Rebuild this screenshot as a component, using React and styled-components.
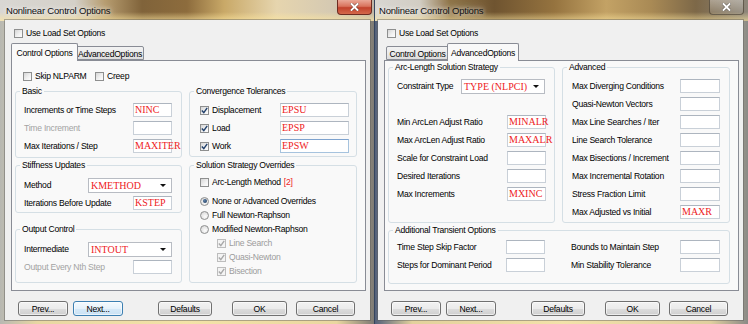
import React from 'react'
import styled, { createGlobalStyle, css } from 'styled-components'

const GlobalStyle = createGlobalStyle`
  html, body { margin: 0; padding: 0; background: #3a3226; }
  body {
    font-family: "Liberation Sans", Arial, sans-serif;
    font-size: 8.6px;
    letter-spacing: -0.25px;
    color: #000;
  }
  * { box-sizing: border-box; }
`

const Screen = styled.div`
  display: flex;
  width: 748px;
  height: 324px;
  overflow: hidden;
`

const activeBg = `
  linear-gradient(180deg, rgba(255,240,190,0) 0px, rgba(255,240,190,0) 12px, rgba(255,232,160,.6) 20px) top / 100% 21px no-repeat,
  linear-gradient(90deg, #d9d7d3 0%, #d4d0c8 20%, #b79d70 28%, #80633a 38%, #8d6c3d 50%, #c9a968 60%, #e6d5ae 74%, #d6cab2 88%, #bdb5a8 100%) top / 100% 21px no-repeat,
  linear-gradient(90deg, #b8b8b2 0%, #e8d7a2 10%, #f4e3a8 50%, #ead7a0 90%, #7d7a74 100%)
`
const inactiveBg = `
  linear-gradient(180deg, rgba(255,240,190,0) 0px, rgba(255,240,190,0) 12px, rgba(255,232,160,.55) 20px) top / 100% 21px no-repeat,
  linear-gradient(90deg, #d8d6d2 0%, #d2cdc3 12%, #8f7448 20%, #6f5430 32%, #95733f 48%, #c3a265 62%, #a98a55 74%, #7d6848 86%, #8e877b 100%) top / 100% 21px no-repeat,
  linear-gradient(90deg, #53607a 0%, #e3d19c 10%, #f3e2aa 50%, #e0cf9f 90%, #8b8a86 100%)
`

const Frame = styled.div`
  width: 374px;
  height: 324px;
  display: flex;
  flex-direction: column;
  background: ${p => (p.$active ? activeBg : inactiveBg)};
  ${p => !p.$active && css`border-left: 1px solid #34445e;`}
`

const TitleBar = styled.div`
  height: 20px;
  display: flex;
  justify-content: space-between;
  align-items: flex-start;
  padding-left: ${p => p.$pl}px;
`

const TitleText = styled.span`
  font-size: 9.5px;
  letter-spacing: -0.2px;
  line-height: 21px;
  color: #111;
  text-shadow: 0 0 4px rgba(255,255,255,.9), 0 0 8px rgba(255,255,255,.7);
`

const CloseBtn = styled.div`
  width: 35px;
  height: 15px;
  margin-right: ${p => p.$mr}px;
  border: 1px solid ${p => (p.$active ? '#6d2b20' : 'rgba(70,60,45,.7)')};
  border-top: none;
  border-radius: 0 0 4px 4px;
  background: ${p =>
    p.$active
      ? 'linear-gradient(180deg, #eaa897 0%, #d9735d 45%, #c2422c 55%, #d4694b 100%)'
      : 'linear-gradient(180deg, rgba(255,255,255,.35), rgba(255,255,255,.08))'};
  display: flex;
  align-items: center;
  justify-content: center;
`

const Client = styled.div`
  margin: 0 ${p => p.$mr}px 4px ${p => p.$ml}px;
  height: 300px;
  background: #f0f0f0;
  box-shadow: 0 0 0 1px rgba(90, 90, 90, .45);
  padding: 6px 0 0 6px;
  display: flex;
  flex-direction: column;
`

const TopCheck = styled.label`
  height: 14px;
  margin-left: 3px;
  display: flex;
  align-items: center;
  gap: 3px;
`

const TabStrip = styled.div`
  margin-top: 3px;
  height: 17px;
  padding-left: 2px;
  display: flex;
  align-items: flex-end;
`

const Tab = styled.div`
  width: ${p => p.$w + (p.$selected ? 4 : 0)}px;
  height: ${p => (p.$selected ? 18 : 14)}px;
  margin: 0 ${p => (p.$selected ? -2 : 0)}px ${p => (p.$selected ? -1 : 0)}px;
  position: relative;
  z-index: ${p => (p.$selected ? 2 : 1)};
  border: 1px solid #898c95;
  border-bottom: ${p => (p.$selected ? 'none' : '1px solid #898c95')};
  border-radius: 2px 2px 0 0;
  background: ${p => (p.$selected ? '#f9f9f9' : 'linear-gradient(180deg, #f3f3f3 0%, #ebebeb 50%, #dcdcdc 100%)')};
  display: flex;
  align-items: center;
  justify-content: center;
  padding-top: ${p => (p.$selected ? 0 : 1)}px;
  white-space: nowrap;
`

const Panel = styled.div`
  width: 355px;
  height: 231px;
  border: 1px solid #898c95;
  background: #f9f9f9;
  display: flex;
  flex-direction: column;
`

const SkipRow = styled.div`
  margin-top: 8px;
  height: 14px;
  padding-left: 11px;
  display: flex;
  align-items: center;
`

const CheckItem = styled.label`
  display: flex;
  align-items: center;
  gap: 3px;
  width: ${p => (p.$w ? `${p.$w}px` : 'auto')};
  color: ${p => (p.$disabled ? '#9c9c9c' : '#000')};
  white-space: nowrap;
`

const Columns = styled.div`
  margin: ${p => p.$mt}px 0 0 ${p => p.$ml ?? 3}px;
  display: grid;
  grid-template-columns: ${p => p.$cols || '167px 168px'};
  column-gap: 7px;
  align-items: start;
`

const Column = styled.div`
  display: flex;
  flex-direction: column;
  min-width: 0;
`

const Group = styled.fieldset`
  margin: ${p => p.$mt || 0}px 0 0;
  padding: ${p => p.$pt || 0}px 0 0;
  min-width: 0;
  width: 100%;
  height: ${p => p.$h}px;
  border: 1px solid #d5dfe5;
  border-radius: 3px;
  ${p => p.$span && css`grid-column: 1 / -1;`}
`

const Legend = styled.legend`
  margin-left: 4px;
  padding: 0 2px;
  line-height: 12px;
  color: #000;
`

const FieldRow = styled.div`
  height: 18px;
  display: flex;
  align-items: center;
  justify-content: space-between;
  padding: 0 ${p => p.$pr}px 0 ${p => p.$pl}px;
`

const Label = styled.span`
  color: ${p => (p.$disabled ? '#a3a3a3' : '#000')};
  white-space: nowrap;
`

const Field = styled.div`
  width: ${p => p.$w}px;
  height: 14px;
  flex: none;
  background: #fff;
  border: 1px solid ${p => (p.$hover ? '#a6c3de' : '#c9d0d8')};
  border-top-color: ${p => (p.$hover ? '#7da2ce' : '#adb5bf')};
  font-family: "Liberation Serif", "Times New Roman", serif;
  font-size: 10px;
  letter-spacing: 0;
  line-height: 12px;
  color: #ee1b24;
  padding-left: 1px;
  white-space: nowrap;
  overflow: visible;
`

const Select = styled.div`
  width: 84px;
  height: 15px;
  flex: none;
  background: #fff;
  border: 1px solid #b8bcc3;
  display: flex;
  align-items: center;
  justify-content: space-between;
  padding: 0 5px 0 2px;
  font-family: "Liberation Serif", "Times New Roman", serif;
  font-size: 10px;
  letter-spacing: 0;
  color: #ee1b24;
  white-space: nowrap;
`

const Arrow = styled.span`
  width: 0;
  height: 0;
  border-left: 3px solid transparent;
  border-right: 3px solid transparent;
  border-top: 3px solid #111;
`

const OptionRow = styled.div`
  height: 14px;
  margin-top: ${p => p.$mt || 0}px;
  padding-left: ${p => 10 + (p.$indent || 0)}px;
  display: flex;
  align-items: center;
`

const Note = styled.span`
  color: #ee1b24;
  margin-left: 3px;
`

const Box = styled.span`
  width: 9px;
  height: 9px;
  flex: none;
  border: 1px solid ${p => (p.$disabled ? '#bdbdbd' : '#8e8f8f')};
  background: ${p => (p.$disabled ? '#f4f4f4' : 'linear-gradient(135deg, #d6d6d6 0%, #f2f2f2 60%, #fdfdfd 100%)')};
  display: inline-flex;
  align-items: center;
  justify-content: center;
`

const Round = styled.span`
  width: 9px;
  height: 9px;
  flex: none;
  border-radius: 50%;
  border: 1px solid #8e8f8f;
  background: radial-gradient(circle at 60% 65%, #fdfdfd 0%, #e6e6e6 55%, #cfcfcf 100%);
  display: inline-flex;
  align-items: center;
  justify-content: center;
`

const Dot = styled.span`
  width: 4px;
  height: 4px;
  border-radius: 50%;
  background: radial-gradient(circle at 40% 40%, #5a7ea8, #1b3556);
`

const Buttons = styled.div`
  margin-top: 10px;
  padding-left: 7px;
  display: flex;
`

const Button = styled.div`
  width: ${p => p.$w}px;
  height: 15px;
  margin-left: ${p => p.$ml || 0}px;
  border: 1px solid ${p => (p.$default ? '#3c7fb1' : '#707070')};
  border-radius: 3px;
  background: ${p =>
    p.$default
      ? 'linear-gradient(180deg, #f4fafe 0%, #e6f2fb 50%, #d6e9f7 50%, #c9e2f5 100%)'
      : 'linear-gradient(180deg, #f2f2f2 0%, #ebebeb 50%, #dddddd 50%, #cfcfcf 100%)'};
  box-shadow: inset 0 0 0 1px rgba(255,255,255,.6);
  display: flex;
  align-items: center;
  justify-content: center;
  white-space: nowrap;
`

function CheckBox({ checked, disabled }) {
  return (
    <Box $disabled={disabled}>
      {checked && (
        <svg width="7" height="7" viewBox="0 0 7 7">
          <path d="M0.8 3.6 L2.8 5.6 L6.2 0.8" fill="none" stroke={disabled ? '#a9a9a9' : '#21406b'} strokeWidth="1.4" />
        </svg>
      )}
    </Box>
  )
}

function Radio({ checked }) {
  return <Round>{checked && <Dot />}</Round>
}

function Window({ active, children }) {
  return (
    <Frame $active={active}>
      <TitleBar $pl={active ? 6 : 4}>
        <TitleText>Nonlinear Control Options</TitleText>
        <CloseBtn $active={active} $mr={active ? 2 : 4}>
          <svg width="9" height="8" viewBox="0 0 9 8">
            <path d="M1.5 1 L7.5 7 M7.5 1 L1.5 7" stroke="#3a3a3a" strokeWidth="3.2" strokeLinecap="square" opacity=".45" />
            <path d="M1.5 1 L7.5 7 M7.5 1 L1.5 7" stroke="#fff" strokeWidth="1.8" strokeLinecap="square" />
          </svg>
        </CloseBtn>
      </TitleBar>
      <Client $ml={active ? 5 : 3} $mr={active ? 4 : 5}>
        {children}
      </Client>
    </Frame>
  )
}

function Footer({ focusNext }) {
  return (
    <Buttons>
      <Button $w={50}>Prev...</Button>
      <Button $w={50} $ml={5} $default={focusNext}>Next...</Button>
      <Button $w={54} $ml={35}>Defaults</Button>
      <Button $w={55} $ml={20}>OK</Button>
      <Button $w={59} $ml={9}>Cancel</Button>
    </Buttons>
  )
}

function Tabs({ selected }) {
  return (
    <TabStrip>
      <Tab $w={63} $selected={selected === 0}>Control Options</Tab>
      <Tab $w={68} $selected={selected === 1}>AdvancedOptions</Tab>
    </TabStrip>
  )
}

const basicRows = [
  { label: 'Increments or Time Steps', value: 'NINC' },
  { label: 'Time Increment', value: '', disabled: true },
  { label: 'Max Iterations / Step', value: 'MAXITER' },
]

const tolerances = [
  { label: 'Displacement', value: 'EPSU' },
  { label: 'Load', value: 'EPSP' },
  { label: 'Work', value: 'EPSW', hover: true },
]

const arcRows = [
  { label: 'Min ArcLen Adjust Ratio', value: 'MINALR' },
  { label: 'Max ArcLen Adjust Ratio', value: 'MAXALR' },
  { label: 'Scale for Constraint Load', value: '' },
  { label: 'Desired Iterations', value: '' },
  { label: 'Max Increments', value: 'MXINC' },
]

const advancedRows = [
  ['Max Diverging Conditions', ''],
  ['Quasi-Newton Vectors', ''],
  ['Max Line Searches / Iter', ''],
  ['Line Search Tolerance', ''],
  ['Max Bisections / Increment', ''],
  ['Max Incremental Rotation', ''],
  ['Stress Fraction Limit', ''],
  ['Max Adjusted vs Initial', 'MAXR'],
]

function ControlOptions() {
  return (
    <Panel>
      <SkipRow>
        <CheckItem $w={72}><CheckBox />Skip NLPARM</CheckItem>
        <CheckItem><CheckBox />Creep</CheckItem>
      </SkipRow>
      <Columns $mt={2}>
        <Column>
          <Group $h={73} $pt={4}>
            <Legend>Basic</Legend>
            {basicRows.map(r => (
              <FieldRow key={r.label} $pl={8} $pr={9}>
                <Label $disabled={r.disabled}>{r.label}</Label>
                <Field $w={39}>{r.value}</Field>
              </FieldRow>
            ))}
          </Group>
          <Group $h={54} $pt={5} $mt={1}>
            <Legend>Stiffness Updates</Legend>
            <FieldRow $pl={8} $pr={9}>
              <Label>Method</Label>
              <Select>KMETHOD<Arrow /></Select>
            </FieldRow>
            <FieldRow $pl={8} $pr={9}>
              <Label>Iterations Before Update</Label>
              <Field $w={39}>KSTEP</Field>
            </FieldRow>
          </Group>
          <Group $h={60} $pt={5} $mt={10}>
            <Legend>Output Control</Legend>
            <FieldRow $pl={8} $pr={9}>
              <Label>Intermediate</Label>
              <Select>INTOUT<Arrow /></Select>
            </FieldRow>
            <FieldRow $pl={8} $pr={9}>
              <Label $disabled>Output Every Nth Step</Label>
              <Field $w={39} />
            </FieldRow>
          </Group>
        </Column>
        <Column>
          <Group $h={72} $pt={4}>
            <Legend>Convergence Tolerances</Legend>
            {tolerances.map(r => (
              <FieldRow key={r.label} $pl={10} $pr={7}>
                <CheckItem><CheckBox checked />{r.label}</CheckItem>
                <Field $w={69} $hover={r.hover}>{r.value}</Field>
              </FieldRow>
            ))}
          </Group>
          <Group $h={124} $pt={4} $mt={2}>
            <Legend>Solution Strategy Overrides</Legend>
            <OptionRow>
              <CheckItem><CheckBox />Arc-Length Method</CheckItem>
              <Note>[2]</Note>
            </OptionRow>
            <OptionRow $mt={5}><CheckItem><Radio checked />None or Advanced Overrides</CheckItem></OptionRow>
            <OptionRow><CheckItem><Radio />Full Newton-Raphson</CheckItem></OptionRow>
            <OptionRow><CheckItem><Radio />Modified Newton-Raphson</CheckItem></OptionRow>
            <OptionRow $indent={17}><CheckItem $disabled><CheckBox checked disabled />Line Search</CheckItem></OptionRow>
            <OptionRow $indent={17}><CheckItem $disabled><CheckBox checked disabled />Quasi-Newton</CheckItem></OptionRow>
            <OptionRow $indent={17}><CheckItem $disabled><CheckBox checked disabled />Bisection</CheckItem></OptionRow>
          </Group>
        </Column>
      </Columns>
    </Panel>
  )
}

function AdvancedOptions() {
  return (
    <Panel>
      <Columns $mt={0}>
        <Group $h={162} $pt={4}>
          <Legend>Arc-Length Solution Strategy</Legend>
          <FieldRow $pl={8} $pr={9}>
            <Label>Constraint Type</Label>
            <Select>TYPE (NLPCI)<Arrow /></Select>
          </FieldRow>
          <FieldRow $pl={8} $pr={8} />
          {arcRows.map(r => (
            <FieldRow key={r.label} $pl={8} $pr={8}>
              <Label>{r.label}</Label>
              <Field $w={39}>{r.value}</Field>
            </FieldRow>
          ))}
        </Group>
        <Group $h={162} $pt={4}>
          <Legend>Advanced</Legend>
          {advancedRows.map(([label, value]) => (
            <FieldRow key={label} $pl={9} $pr={9}>
              <Label>{label}</Label>
              <Field $w={40}>{value}</Field>
            </FieldRow>
          ))}
        </Group>
        <Group $h={60} $pt={2} $mt={1} $span>
          <Legend>Additional Transient Options</Legend>
          <Columns $mt={0} $ml={0} $cols="166px 167px">
            <Column>
              <FieldRow $pl={8} $pr={10}>
                <Label>Time Step Skip Factor</Label>
                <Field $w={39} />
              </FieldRow>
              <FieldRow $pl={8} $pr={10}>
                <Label>Steps for Dominant Period</Label>
                <Field $w={39} />
              </FieldRow>
            </Column>
            <Column>
              <FieldRow $pl={9} $pr={9}>
                <Label>Bounds to Maintain Step</Label>
                <Field $w={40} />
              </FieldRow>
              <FieldRow $pl={9} $pr={9}>
                <Label>Min Stability Tolerance</Label>
                <Field $w={40} />
              </FieldRow>
            </Column>
          </Columns>
        </Group>
      </Columns>
    </Panel>
  )
}

export default function App() {
  return (
    <>
      <GlobalStyle />
      <Screen>
        <Window active>
          <TopCheck><CheckBox />Use Load Set Options</TopCheck>
          <Tabs selected={0} />
          <ControlOptions />
          <Footer focusNext />
        </Window>
        <Window>
          <TopCheck><CheckBox />Use Load Set Options</TopCheck>
          <Tabs selected={1} />
          <AdvancedOptions />
          <Footer />
        </Window>
      </Screen>
    </>
  )
}
